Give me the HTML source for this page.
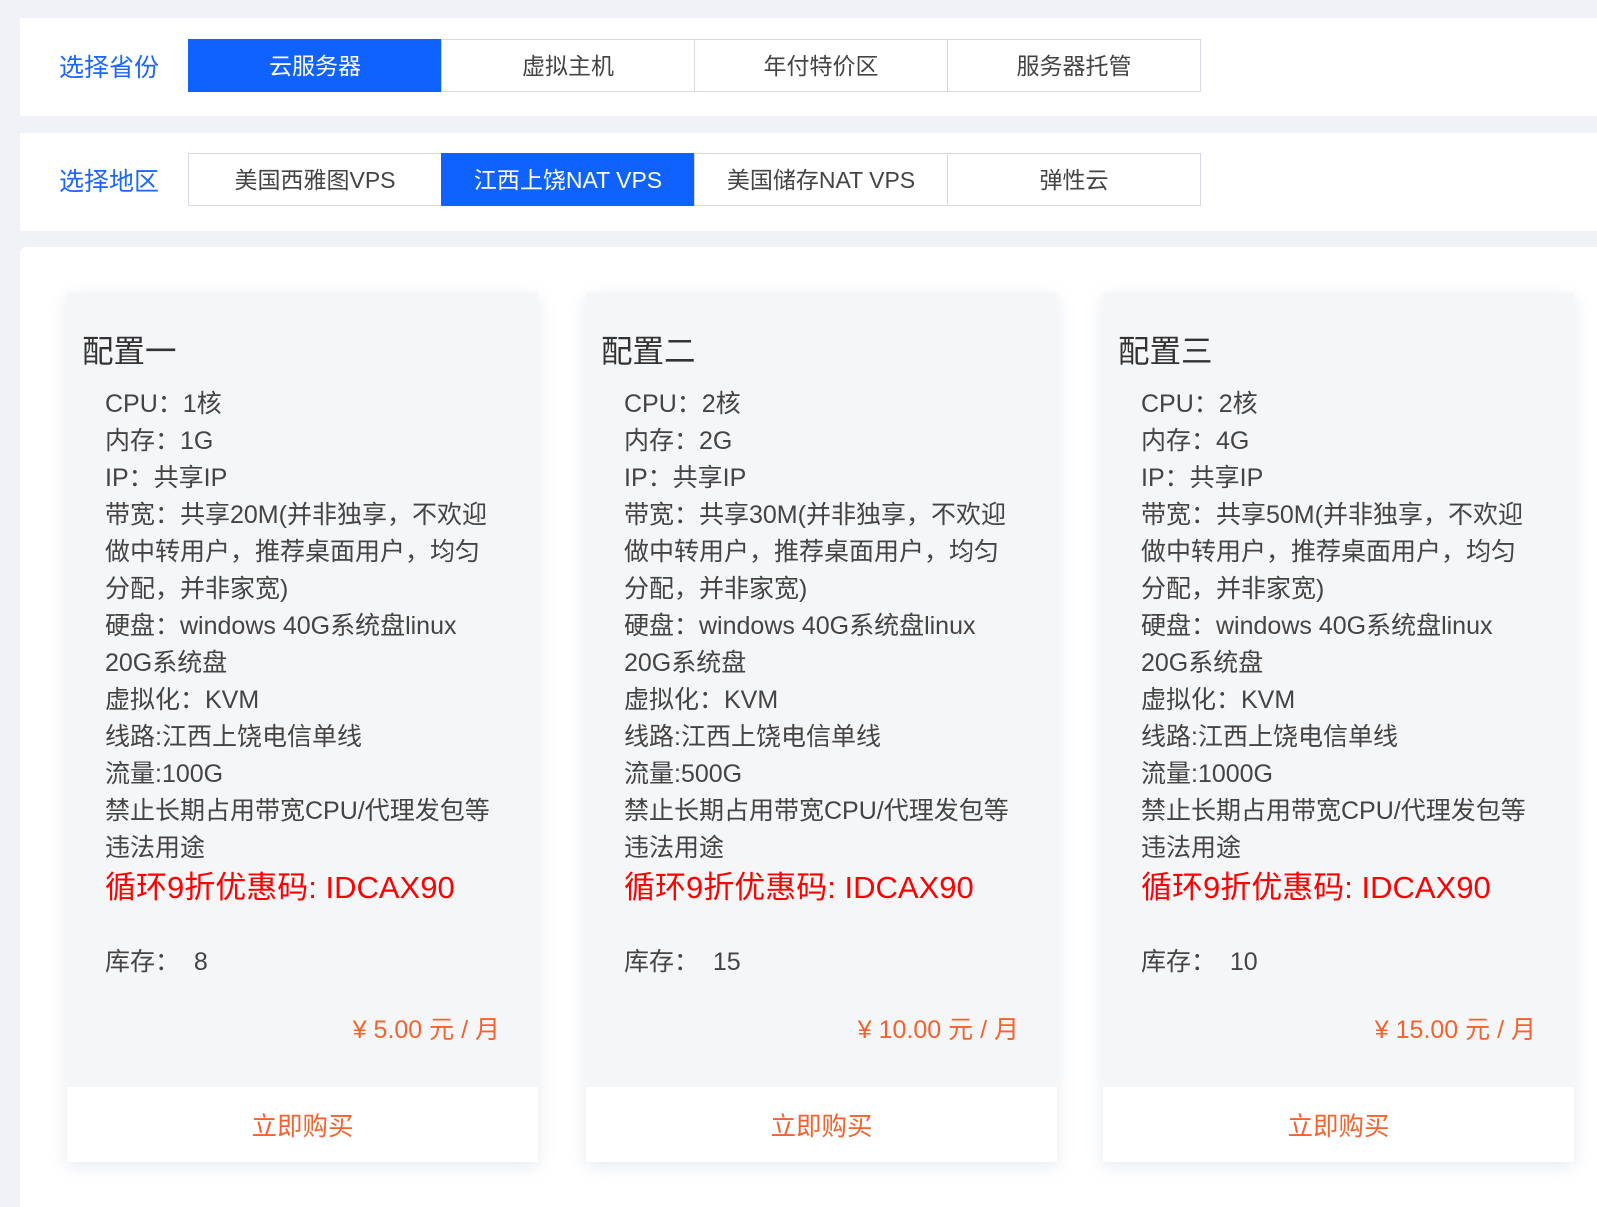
<!DOCTYPE html>
<html><head><meta charset="utf-8"><style>
*{margin:0;padding:0;box-sizing:border-box}
body{width:1597px;height:1177px;overflow:hidden;background:#f0f2f7;font-family:"Liberation Sans","Noto Sans CJK SC",sans-serif;position:relative}
.panel{position:absolute;left:20px;right:0;background:#fff}
.lbl{position:absolute;left:39px;font-size:25px;line-height:30px;color:#1a66ff}
.btns{position:absolute;left:169px;display:flex}
.b{width:254px;height:53px;border:1px solid #d6d9e2;margin-left:-1px;font-size:23px;color:#444;display:flex;align-items:center;justify-content:center;background:#fff;padding-bottom:3px}
.b.on{background:#0f62fe;color:#fff;border-color:#0f62fe}
.card{position:absolute;top:293px;width:471px;height:869px;background:#f5f6f8;box-shadow:0 4px 16px rgba(200,208,225,.45)}
.t{position:absolute;left:15px;top:40px;font-size:31.5px;line-height:36px;color:#333}
.items{position:absolute;left:38px;top:93px;font-size:25px;line-height:37px;color:#444;white-space:nowrap}
.promo{position:absolute;left:38px;top:577px;font-size:31px;line-height:36px;color:#f00;white-space:nowrap}
.stock{position:absolute;left:38px;top:651px;font-size:25px;line-height:36px;color:#444;white-space:pre}
.price{position:absolute;right:38px;top:719px;font-size:25px;line-height:36px;color:#f4622d}
.buy{position:absolute;left:0;right:0;top:794px;height:75px;background:#fff;display:flex;align-items:center;justify-content:center;font-size:25.5px;color:#f4622d}
</style></head><body>
<div class="panel" style="top:18px;height:98px">
<div class="lbl" style="top:35px">选择省份</div>
<div class="btns" style="top:21px"><div class="b on">云服务器</div><div class="b">虚拟主机</div><div class="b">年付特价区</div><div class="b">服务器托管</div></div>
</div>
<div class="panel" style="top:133px;height:98px">
<div class="lbl" style="top:34px">选择地区</div>
<div class="btns" style="top:20px"><div class="b">美国西雅图VPS</div><div class="b on">江西上饶NAT VPS</div><div class="b">美国储存NAT VPS</div><div class="b">弹性云</div></div>
</div>
<div class="panel" style="top:247px;height:960px;border-radius:6px 0 0 0"></div>

<div class="card" style="left:67px">
<div class="t">配置一</div>
<div class="items">CPU：1核<br>内存：1G<br>IP：共享IP<br>带宽：共享20M(并非独享，不欢迎<br>做中转用户，推荐桌面用户，均匀<br>分配，并非家宽)<br>硬盘：windows 40G系统盘linux<br>20G系统盘<br>虚拟化：KVM<br>线路:江西上饶电信单线<br>流量:100G<br>禁止长期占用带宽CPU/代理发包等<br>违法用途</div>
<div class="promo">循环9折优惠码: IDCAX90</div>
<div class="stock">库存：  8</div>
<div class="price">¥ 5.00 元 / 月</div>
<div class="buy">立即购买</div>
</div>
<div class="card" style="left:586px">
<div class="t">配置二</div>
<div class="items">CPU：2核<br>内存：2G<br>IP：共享IP<br>带宽：共享30M(并非独享，不欢迎<br>做中转用户，推荐桌面用户，均匀<br>分配，并非家宽)<br>硬盘：windows 40G系统盘linux<br>20G系统盘<br>虚拟化：KVM<br>线路:江西上饶电信单线<br>流量:500G<br>禁止长期占用带宽CPU/代理发包等<br>违法用途</div>
<div class="promo">循环9折优惠码: IDCAX90</div>
<div class="stock">库存：  15</div>
<div class="price">¥ 10.00 元 / 月</div>
<div class="buy">立即购买</div>
</div>
<div class="card" style="left:1103px">
<div class="t">配置三</div>
<div class="items">CPU：2核<br>内存：4G<br>IP：共享IP<br>带宽：共享50M(并非独享，不欢迎<br>做中转用户，推荐桌面用户，均匀<br>分配，并非家宽)<br>硬盘：windows 40G系统盘linux<br>20G系统盘<br>虚拟化：KVM<br>线路:江西上饶电信单线<br>流量:1000G<br>禁止长期占用带宽CPU/代理发包等<br>违法用途</div>
<div class="promo">循环9折优惠码: IDCAX90</div>
<div class="stock">库存：  10</div>
<div class="price">¥ 15.00 元 / 月</div>
<div class="buy">立即购买</div>
</div>
</body></html>
